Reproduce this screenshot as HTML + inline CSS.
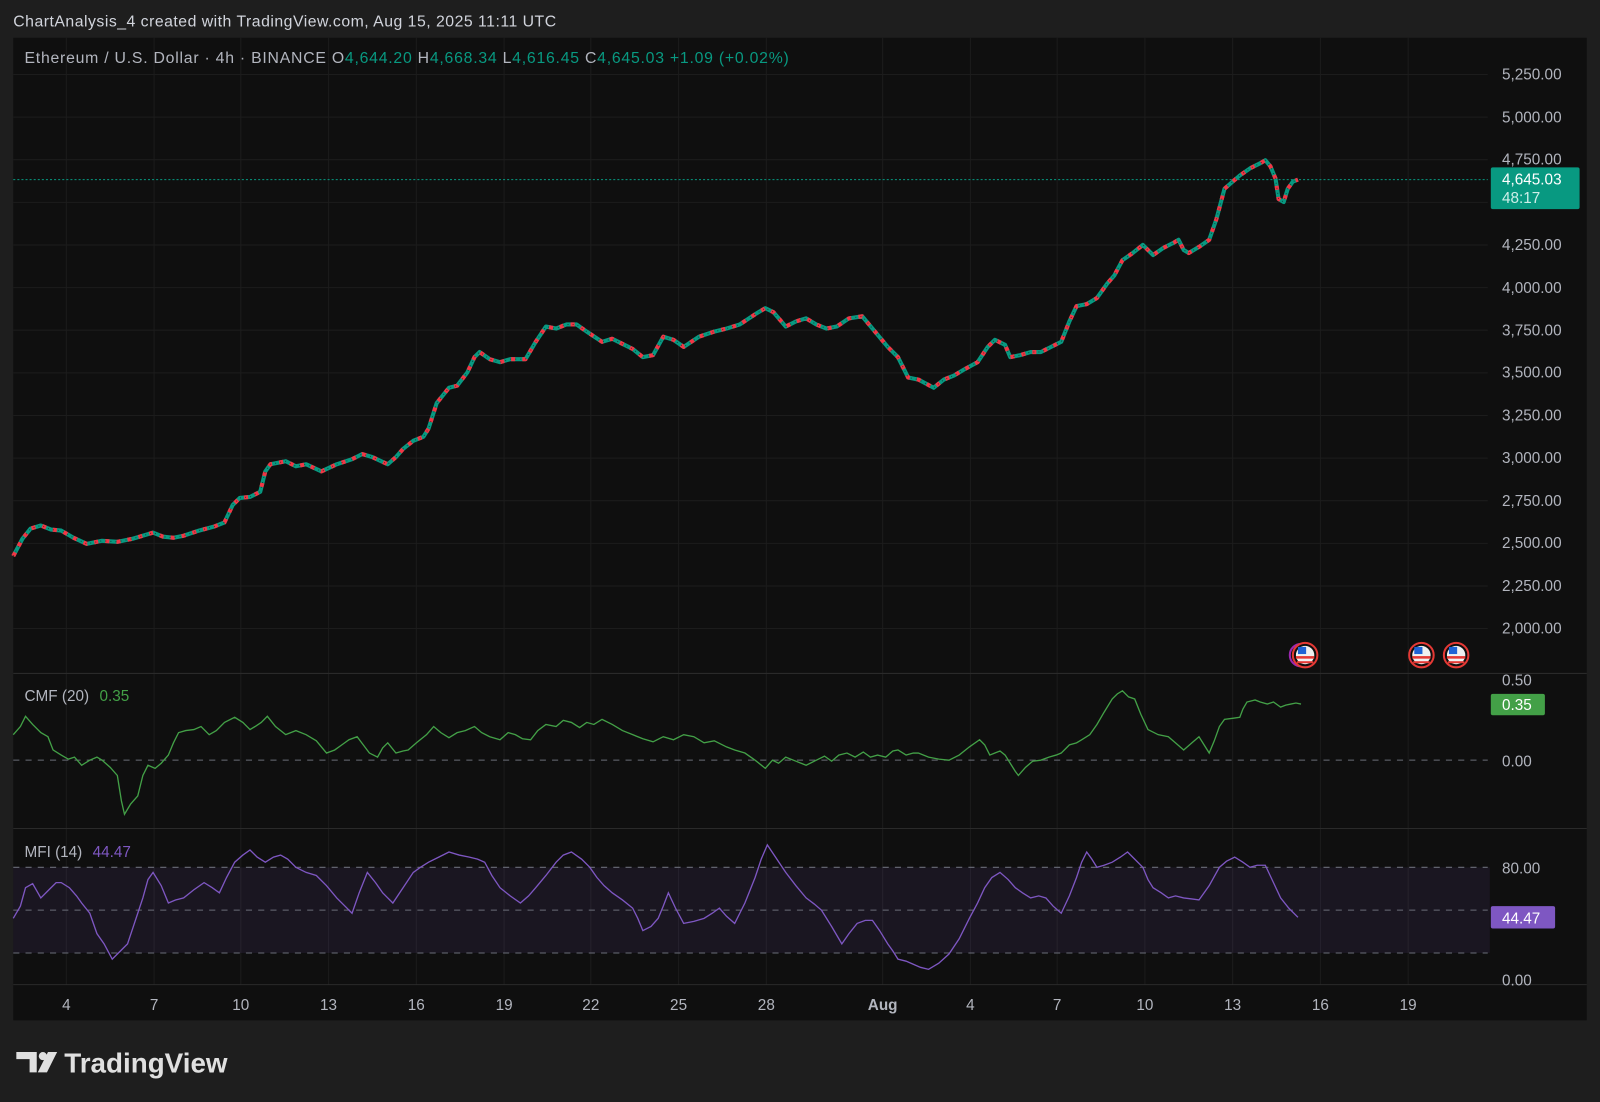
<!DOCTYPE html>
<html><head><meta charset="utf-8"><style>
html,body{margin:0;padding:0;background:#1e1e1e;overflow:hidden}
svg{display:block}
text{font-family:"Liberation Sans",sans-serif}
</style></head><body>
<svg width="1600" height="1102" viewBox="0 0 1568 1080" preserveAspectRatio="none" xmlns="http://www.w3.org/2000/svg" xmlns:xlink="http://www.w3.org/1999/xlink">
<defs>
<polyline id="pr" points="13,545 22,528 30,518 40,515 50,519 60,520 72,527 85,533 100,530 115,531 130,528 140,525 150,522 160,526 170,527 180,525 195,520 210,516 220,512 228,495 235,488 245,487 255,482 260,462 265,455 280,452 290,457 300,455 315,462 330,455 345,450 355,445 365,448 380,455 388,448 395,440 405,432 415,428 420,420 428,395 440,380 448,378 458,365 465,350 470,345 480,352 490,355 500,352 515,352 525,335 535,320 545,322 555,318 565,318 575,325 590,335 600,332 612,338 620,342 630,350 640,348 650,330 660,333 670,340 685,330 700,325 712,322 725,318 740,308 750,302 758,306 770,320 780,315 790,312 800,318 810,322 820,320 832,312 845,310 855,322 870,340 880,350 890,370 900,372 915,380 925,372 935,368 945,362 958,355 968,340 975,333 985,338 990,350 1000,348 1010,345 1020,345 1030,340 1040,335 1048,315 1055,300 1065,298 1075,292 1085,278 1092,270 1100,255 1110,248 1120,240 1130,250 1140,243 1150,238 1155,235 1160,245 1165,248 1175,242 1185,235 1192,215 1200,185 1208,178 1215,172 1225,165 1235,160 1240,157 1245,163 1250,175 1253,195 1258,198 1262,185 1267,178 1272,176"/>
<g id="f1">
<circle cx="1279" cy="642" r="12" fill="#0f0f0f" stroke="#e53935" stroke-width="2"/>
<circle cx="1279" cy="642" r="9" fill="#f0f0f0"/>
<rect x="1270" y="643" width="18" height="2.5" fill="#e53935"/>
<rect x="1271" y="648" width="16" height="2" fill="#e53935"/>
<rect x="1272" y="634" width="8" height="7" fill="#1e63d6"/>
</g>
</defs>
<rect width="1568" height="1080" fill="#1e1e1e"/>
<text x="13" y="26" fill="#d1d4dc" font-size="15.5" textLength="532" lengthAdjust="spacing">ChartAnalysis_4 created with TradingView.com, Aug 15, 2025 11:11 UTC</text>
<rect x="13" y="37" width="1542" height="963" fill="#0f0f0f"/>
<g stroke="#1c1c1c" stroke-width="1">
<line x1="65" x2="65" y1="37" y2="965"/><line x1="151" x2="151" y1="37" y2="965"/><line x1="236" x2="236" y1="37" y2="965"/><line x1="322" x2="322" y1="37" y2="965"/><line x1="408" x2="408" y1="37" y2="965"/><line x1="494" x2="494" y1="37" y2="965"/><line x1="579" x2="579" y1="37" y2="965"/><line x1="665" x2="665" y1="37" y2="965"/><line x1="751" x2="751" y1="37" y2="965"/><line x1="865" x2="865" y1="37" y2="965"/><line x1="951" x2="951" y1="37" y2="965"/><line x1="1036" x2="1036" y1="37" y2="965"/><line x1="1122" x2="1122" y1="37" y2="965"/><line x1="1208" x2="1208" y1="37" y2="965"/><line x1="1294" x2="1294" y1="37" y2="965"/><line x1="1380" x2="1380" y1="37" y2="965"/>
<line x1="13" x2="1458" y1="73" y2="73"/><line x1="13" x2="1458" y1="114.8" y2="114.8"/><line x1="13" x2="1458" y1="156.5" y2="156.5"/><line x1="13" x2="1458" y1="198.3" y2="198.3"/><line x1="13" x2="1458" y1="240.1" y2="240.1"/><line x1="13" x2="1458" y1="281.9" y2="281.9"/><line x1="13" x2="1458" y1="323.6" y2="323.6"/><line x1="13" x2="1458" y1="365.4" y2="365.4"/><line x1="13" x2="1458" y1="407.2" y2="407.2"/><line x1="13" x2="1458" y1="449" y2="449"/><line x1="13" x2="1458" y1="490.7" y2="490.7"/><line x1="13" x2="1458" y1="532.5" y2="532.5"/><line x1="13" x2="1458" y1="574.3" y2="574.3"/><line x1="13" x2="1458" y1="616" y2="616"/>
</g>
<line x1="13" x2="1555" y1="660" y2="660" stroke="#2a2a2a"/>
<line x1="13" x2="1555" y1="812" y2="812" stroke="#2a2a2a"/>
<line x1="13" x2="1555" y1="965" y2="965" stroke="#2a2a2a"/>
<rect x="13" y="850" width="1447" height="84" fill="#7e57c2" fill-opacity="0.1"/>
<g stroke="#6a6d78" stroke-dasharray="6,6" stroke-width="1">
<line x1="13" x2="1458" y1="850" y2="850"/><line x1="13" x2="1458" y1="892" y2="892"/><line x1="13" x2="1458" y1="934" y2="934"/>
<line x1="13" x2="1458" y1="745" y2="745"/>
</g>
<line x1="13" x2="1458" y1="176" y2="176" stroke="#089981" stroke-dasharray="2,2"/>
<g fill="none" stroke-linejoin="round">
<use href="#pr" xlink:href="#pr" stroke="#089981" stroke-width="4"/>
<use href="#pr" xlink:href="#pr" stroke="#f23645" stroke-width="4" stroke-dasharray="4,7"/>
<use href="#pr" xlink:href="#pr" stroke="#0f0f0f" stroke-width="1" stroke-dasharray="1,4" stroke-opacity="0.6"/>
</g>
<polyline fill="none" stroke="#43a047" stroke-width="1.3" points="13,720 20,712 25,702 32,710 40,718 47,722 52,735 60,740 67,744 73,742 80,750 88,745 95,742 100,745 108,752 115,760 119,785 122,798 128,788 135,780 140,760 145,750 152,753 158,748 165,740 170,728 175,718 182,716 190,715 197,712 205,720 212,716 220,708 230,703 238,708 245,715 250,712 256,708 262,702 270,712 280,720 290,716 300,720 310,726 320,738 328,735 335,730 342,725 350,722 356,730 362,738 370,742 375,733 380,728 388,738 395,736 400,735 408,728 418,720 425,712 432,718 440,723 448,718 456,716 465,712 472,718 480,722 490,725 498,718 505,720 512,724 520,725 527,716 535,710 545,712 552,706 560,708 568,713 575,708 582,710 590,705 600,710 610,716 620,720 630,724 640,727 650,722 660,725 670,720 680,722 690,728 700,726 712,732 720,735 730,738 740,745 750,753 757,745 763,748 770,742 780,746 790,750 800,745 808,741 815,746 822,740 830,738 838,742 846,737 853,742 860,740 868,742 875,736 880,735 888,740 895,738 900,738 910,742 920,744 930,745 940,740 950,732 960,725 965,730 970,740 975,738 980,736 985,740 990,748 995,756 998,760 1005,752 1012,746 1020,745 1028,742 1035,740 1040,738 1048,730 1055,728 1060,725 1068,720 1075,710 1082,698 1090,685 1095,680 1100,677 1106,683 1112,685 1118,700 1125,715 1135,720 1145,722 1152,728 1160,735 1168,728 1175,722 1180,730 1185,738 1190,726 1195,712 1200,705 1208,704 1215,703 1218,695 1222,688 1230,686 1235,688 1242,690 1248,688 1255,693 1260,691 1265,690 1270,689 1275,690"/>
<polyline fill="none" stroke="#7e57c2" stroke-width="1.3" points="13,900 20,888 25,870 32,866 40,880 48,872 55,865 60,865 68,870 75,878 80,885 88,895 95,915 102,925 110,940 118,932 125,925 130,910 135,895 140,880 145,862 150,855 158,868 165,885 172,882 180,880 190,872 200,865 208,870 215,875 222,860 230,845 238,838 245,833 252,840 260,845 268,840 275,838 282,842 290,850 300,855 310,858 320,868 330,880 338,888 345,895 352,875 360,855 368,865 375,875 380,880 385,885 395,870 405,855 412,850 420,845 430,840 440,835 450,838 460,840 468,842 475,845 482,858 490,870 500,878 510,885 518,878 525,870 535,858 545,845 552,838 560,835 570,842 578,850 585,860 592,868 600,875 610,882 620,890 625,900 630,912 638,908 645,900 650,888 655,875 662,890 670,905 680,903 690,900 698,895 705,890 712,898 720,905 730,885 740,860 746,842 752,828 760,840 770,855 780,868 790,880 798,886 805,892 815,908 825,925 832,915 840,905 848,902 855,902 862,912 870,925 875,932 880,940 888,942 895,945 902,948 910,950 920,944 930,935 940,920 950,900 958,885 965,870 972,860 980,855 988,862 995,870 1002,875 1010,880 1018,878 1025,880 1032,888 1040,895 1048,878 1055,860 1060,845 1065,835 1070,842 1075,850 1082,848 1090,845 1098,840 1105,835 1112,842 1120,850 1125,862 1130,870 1138,875 1145,880 1152,878 1160,880 1168,881 1175,882 1185,868 1195,850 1202,844 1210,840 1218,845 1225,850 1232,848 1240,848 1248,865 1255,880 1263,890 1272,899"/>
<g fill="#b2b5be" font-size="15">
<text x="65" y="990" text-anchor="middle">4</text><text x="151" y="990" text-anchor="middle">7</text><text x="236" y="990" text-anchor="middle">10</text><text x="322" y="990" text-anchor="middle">13</text><text x="408" y="990" text-anchor="middle">16</text><text x="494" y="990" text-anchor="middle">19</text><text x="579" y="990" text-anchor="middle">22</text><text x="665" y="990" text-anchor="middle">25</text><text x="751" y="990" text-anchor="middle">28</text><text x="865" y="990" text-anchor="middle" font-weight="bold">Aug</text><text x="951" y="990" text-anchor="middle">4</text><text x="1036" y="990" text-anchor="middle">7</text><text x="1122" y="990" text-anchor="middle">10</text><text x="1208" y="990" text-anchor="middle">13</text><text x="1294" y="990" text-anchor="middle">16</text><text x="1380" y="990" text-anchor="middle">19</text>
<text x="1472" y="78">5,250.00</text><text x="1472" y="120">5,000.00</text><text x="1472" y="161">4,750.00</text><text x="1472" y="245">4,250.00</text><text x="1472" y="287">4,000.00</text><text x="1472" y="329">3,750.00</text><text x="1472" y="370">3,500.00</text><text x="1472" y="412">3,250.00</text><text x="1472" y="454">3,000.00</text><text x="1472" y="496">2,750.00</text><text x="1472" y="537">2,500.00</text><text x="1472" y="579">2,250.00</text><text x="1472" y="621">2,000.00</text>
<text x="1472" y="672">0.50</text><text x="1472" y="751">0.00</text><text x="1472" y="856">80.00</text><text x="1472" y="966">0.00</text>
</g>
<text x="24" y="62" font-size="15.5" fill="#b2b5be" textLength="749" lengthAdjust="spacing">Ethereum / U.S. Dollar · 4h · BINANCE  O<tspan fill="#089981">4,644.20</tspan>  H<tspan fill="#089981">4,668.34</tspan>  L<tspan fill="#089981">4,616.45</tspan>  C<tspan fill="#089981">4,645.03  +1.09 (+0.02%)</tspan></text>
<text x="24" y="687" font-size="15" fill="#b2b5be">CMF (20) <tspan fill="#43a047" dx="6">0.35</tspan></text>
<text x="24" y="840" font-size="15" fill="#b2b5be">MFI (14) <tspan fill="#7e57c2" dx="6">44.47</tspan></text>
<rect x="1461" y="164" width="87" height="41" rx="2" fill="#089981"/>
<text x="1472" y="181" font-size="15" fill="#fff">4,645.03</text>
<text x="1472" y="199" font-size="15" fill="#cdeee8">48:17</text>
<rect x="1461" y="680" width="53" height="21" rx="2" fill="#43a047"/>
<text x="1472" y="696" font-size="15" fill="#fff">0.35</text>
<rect x="1461" y="888" width="63" height="22" rx="2" fill="#7e57c2"/>
<text x="1472" y="905" font-size="15" fill="#fff">44.47</text>
<circle cx="1275" cy="642" r="11" fill="none" stroke="#9c27b0" stroke-width="2"/>
<use href="#f1" xlink:href="#f1"/>
<use href="#f1" xlink:href="#f1" x="114"/>
<use href="#f1" xlink:href="#f1" x="148"/>
<g fill="#e0e0e0">
<path d="M16 1031h20v20h-7v-13h-13z"/>
<circle cx="42" cy="1035" r="4"/>
<path d="M47 1031h9l-10 20h-9z"/>
</g>
<text x="63" y="1051" font-size="27" font-weight="bold" fill="#e0e0e0" textLength="160" lengthAdjust="spacingAndGlyphs">TradingView</text>
</svg>
</body></html>
